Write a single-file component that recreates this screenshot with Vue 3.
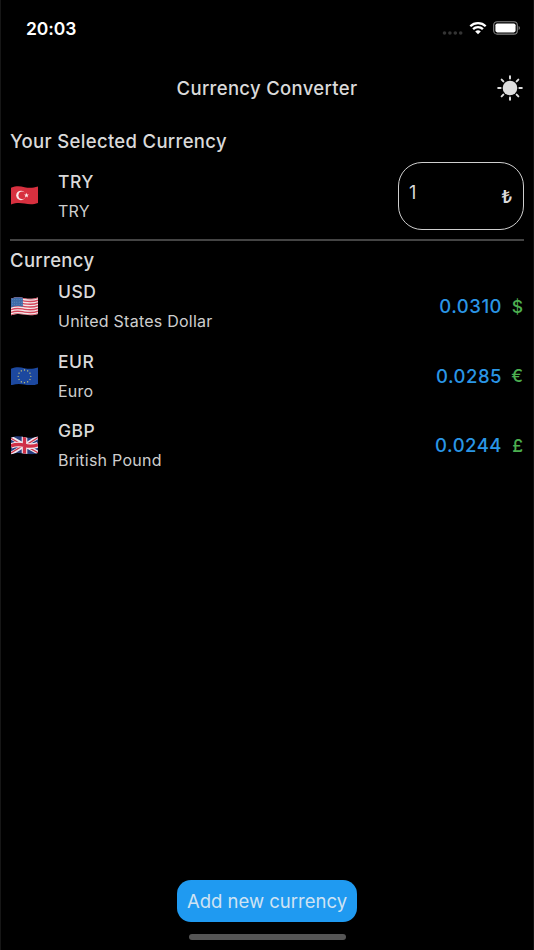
<template>
  <div class="screen">

    <header class="status">
      <span class="time">20:03</span>
      <div class="status-icons">
        <svg class="dots" width="20" height="4" viewBox="0 0 20 4">
          <circle v-for="i in 4" :key="i" :cx="i * 5.4 - 3.4" cy="2" r="1.8" />
        </svg>
        <svg class="wifi" width="18" height="14" viewBox="0 0 18 14">
          <path d="M1.3 5.2a11 11 0 0 1 15.4 0" />
          <path d="M4.1 8.1a7 7 0 0 1 9.8 0" />
          <path class="wifi-tip" d="M6.2 10.5a4 4 0 0 1 5.6 0L9 13.3z" />
        </svg>
        <svg class="battery" width="27" height="14" viewBox="0 0 27 14">
          <rect class="shell" x=".7" y=".7" width="23.6" height="12.4" rx="3.4" />
          <rect class="charge" x="2.4" y="2.4" width="20.2" height="9" rx="1.8" />
          <path class="cap" d="M25.6 5q1.3.6 1.3 2t-1.3 2z" />
        </svg>
      </div>
    </header>

    <div class="navbar">
      <h1>Currency Converter</h1>
      <button class="theme" aria-label="Toggle theme">
        <svg width="28" height="28" viewBox="0 0 28 28">
          <circle cx="14" cy="14" r="7.3" />
          <path
            v-for="i in 8"
            :key="i"
            d="M14 2.2v2.4"
            :transform="`rotate(${i * 45} 14 14)`"
          />
        </svg>
      </button>
    </div>

    <main>
      <h2 class="selected-title">Your Selected Currency</h2>

      <section class="row selected">
        <svg class="flag" viewBox="0 0 26 18">
          <path :d="wave" fill="#d7303f" />
          <circle cx="9.6" cy="9.1" r="4.6" fill="#fbe9ea" />
          <circle cx="10.9" cy="9" r="3.7" fill="#d7303f" />
          <path d="m14.9 6.6.6 1.6 1.7.1-1.3 1 .4 1.7-1.4-.9-1.5.9.5-1.7-1.3-1 1.7-.1z" fill="#fbe9ea" />
        </svg>
        <div class="names">
          <strong>TRY</strong>
          <span>TRY</span>
        </div>
        <label class="amount">
          <span class="value">{{ amount }}</span>
          <span class="lira">₺</span>
        </label>
      </section>

      <h2 class="list-title">Currency</h2>

      <section v-for="c in currencies" :key="c.code" class="row">
        <svg class="flag" viewBox="0 0 26 18">
          <defs>
            <clipPath :id="`clip-${c.code}`"><path :d="wave" /></clipPath>
          </defs>

          <g v-if="c.code === 'USD'" clip-path="url(#clip-USD)">
            <rect width="26" height="18" fill="#f3e9eb" />
            <path
              v-for="i in 7"
              :key="i"
              :d="`M0 ${i * 2.65 - 1.1}C6 ${i * 2.65 - 3.3} 9 ${i * 2.65 - 2} 13 ${i * 2.65 - 1.4}S21 ${i * 2.65 - .2} 26 ${i * 2.65 - 2.2}`"
              fill="none"
              stroke="#d4455a"
              stroke-width="1.3"
            />
            <path d="M0 0h11.4v9.3Q6 8 0 10z" fill="#3c6ba8" />
            <g fill="#b5cbe4">
              <circle v-for="i in 15" :key="i" :cx="1.5 + (i - 1) % 5 * 2.1" :cy="2.6 + Math.floor((i - 1) / 5) * 2.3" r=".3" />
            </g>
          </g>

          <g v-else-if="c.code === 'EUR'" clip-path="url(#clip-EUR)">
            <rect width="26" height="18" fill="#1c489f" />
            <circle
              v-for="i in 12"
              :key="i"
              cx="13"
              cy="2.9"
              r=".65"
              fill="#c9c577"
              :transform="`rotate(${i * 30} 13 9)`"
            />
          </g>

          <g v-else clip-path="url(#clip-GBP)">
            <rect width="26" height="18" fill="#273e7f" />
            <path d="M0 1.5 26 16M0 17 26 1" stroke="#f1e9ef" stroke-width="3.5" />
            <path d="M0 2.2 11 8.5M15 10 26 16.2M0 16.4 11 9.5M15 8.3 26 1.5" stroke="#cd3348" stroke-width="1.2" />
            <path d="M13 0v18M0 9.5Q6 7.2 13 9T26 8.4" fill="none" stroke="#f1e9ef" stroke-width="5.4" />
            <path d="M13 0v18M0 9.5Q6 7.2 13 9T26 8.4" fill="none" stroke="#cf3047" stroke-width="3.2" />
          </g>
        </svg>
        <div class="names">
          <strong>{{ c.code }}</strong>
          <span>{{ c.name }}</span>
        </div>
        <span class="rate">{{ c.rate }}</span>
        <span class="symbol">{{ c.symbol }}</span>
      </section>
    </main>

    <footer>
      <button class="add">Add new currency</button>
      <div class="home-bar"></div>
    </footer>

  </div>
</template>


<script setup>
import { ref } from "vue"

const amount = ref("1")

// outline shared by all the waving flags
const wave = "M0 1.7C6-.5 9 .4 13 1.2S21 2.2 26 .5V16.4C21 18.3 17 17.7 13 16.9S5 15.9 0 17.7z"

const currencies = [
  { code: "USD", name: "United States Dollar", rate: "0.0310", symbol: "$" },
  { code: "EUR", name: "Euro", rate: "0.0285", symbol: "€" },
  { code: "GBP", name: "British Pound", rate: "0.0244", symbol: "£" }
]
</script>


<style>
body {
  margin: 0;
  background: #000;
}
</style>

<style scoped>
.screen {
  box-sizing: border-box;
  width: 100%;
  height: 950px;
  display: flex;
  flex-direction: column;
  background: #000;
  border-left: 1px solid #161616;
  border-right: 1px solid #111;
  color: #dadada;
  font-family: Inter, "Liberation Sans", sans-serif;
}

button {
  border: 0;
  padding: 0;
  background: none;
  color: inherit;
  font: inherit;
}

.status {
  height: 58px;
  box-sizing: border-box;
  padding: 0 13px 2px 25px;
  display: flex;
  align-items: center;
  justify-content: space-between;
}

.time {
  color: #fff;
  font-size: 17.5px;
  font-weight: 600;
  letter-spacing: -0.1px;
}

.status-icons {
  display: flex;
  align-items: center;
}

.dots {
  width: 21px;
  margin: 9px 6px 0 0;
  fill: #343434;
}

.wifi {
  margin-right: 6px;
  fill: none;
  stroke: #fff;
  stroke-width: 2.3;
}

.wifi-tip {
  fill: #fff;
  stroke: none;
}

.shell {
  fill: none;
  stroke: #858585;
  stroke-width: 1.1;
}

.charge {
  fill: #fff;
}

.cap {
  fill: #858585;
}

.navbar {
  height: 60px;
  display: grid;
  grid-template-columns: 1fr auto 1fr;
  align-items: center;
  padding-right: 9px;
  padding-left: 9px;
}

h1,
h2 {
  margin: 0;
  font-size: 18.5px;
  font-weight: 550;
  letter-spacing: 0.32px;
  white-space: nowrap;
}

h1 {
  grid-column: 2;
}

.theme {
  justify-self: end;
  height: 28px;
}

.theme svg {
  display: block;
  fill: #dedede;
  stroke: #dedede;
  stroke-width: 2;
  stroke-linecap: round;
}

.theme circle {
  stroke: none;
}

main {
  flex: 1;
  padding: 0 9px;
}

.selected-title {
  height: 44px;
  line-height: 47px;
}

.list-title {
  height: 31px;
  line-height: 39px;
}

.row {
  height: 69.6px;
  display: flex;
  align-items: center;
}

.selected {
  height: 76.5px;
  border-bottom: 2px solid #444;
  align-items: flex-start;
}

.selected .flag {
  margin-top: 24px;
}

.selected .names {
  margin-top: 5px;
}

.flag {
  width: 27px;
  height: 18.7px;
  margin: 0 20px 0 1px;
}

.names {
  flex: 1;
  display: flex;
  flex-direction: column;
}

.row:not(.selected) .names {
  padding-top: 1px;
}

.names strong {
  font-size: 17.5px;
  font-weight: 550;
  line-height: 30px;
  letter-spacing: 0.5px;
}

.names span {
  color: #cecece;
  font-size: 16px;
  font-weight: 400;
  line-height: 29px;
  letter-spacing: 0.24px;
}

.amount {
  box-sizing: border-box;
  width: 126px;
  height: 68px;
  display: flex;
  justify-content: space-between;
  padding: 0 11px 0 10px;
  border: 1.5px solid #cfcfcf;
  border-radius: 24px;
}

.value {
  font-size: 18px;
  line-height: 59px;
}

.lira {
  font-family: "Noto Sans", sans-serif;
  font-size: 18px;
  font-weight: 600;
  line-height: 66px;
}

.rate {
  color: #2a96e6;
  font-size: 18.5px;
  font-weight: 550;
  letter-spacing: 0.5px;
}

.symbol {
  width: 22px;
  padding-right: 1px;
  box-sizing: border-box;
  color: #4caf50;
  font-size: 17.5px;
  font-weight: 500;
  text-align: right;
}

footer {
  height: 70px;
  display: flex;
  flex-direction: column;
  align-items: center;
}

.add {
  width: 180px;
  height: 42px;
  border-radius: 14px;
  background: #1f9af1;
  color: #cfe3f3;
  font-size: 18.5px;
  letter-spacing: 0;
  white-space: nowrap;
}

.home-bar {
  width: 157px;
  height: 6px;
  margin-top: 12px;
  border-radius: 3px;
  background: #555;
}
</style>
